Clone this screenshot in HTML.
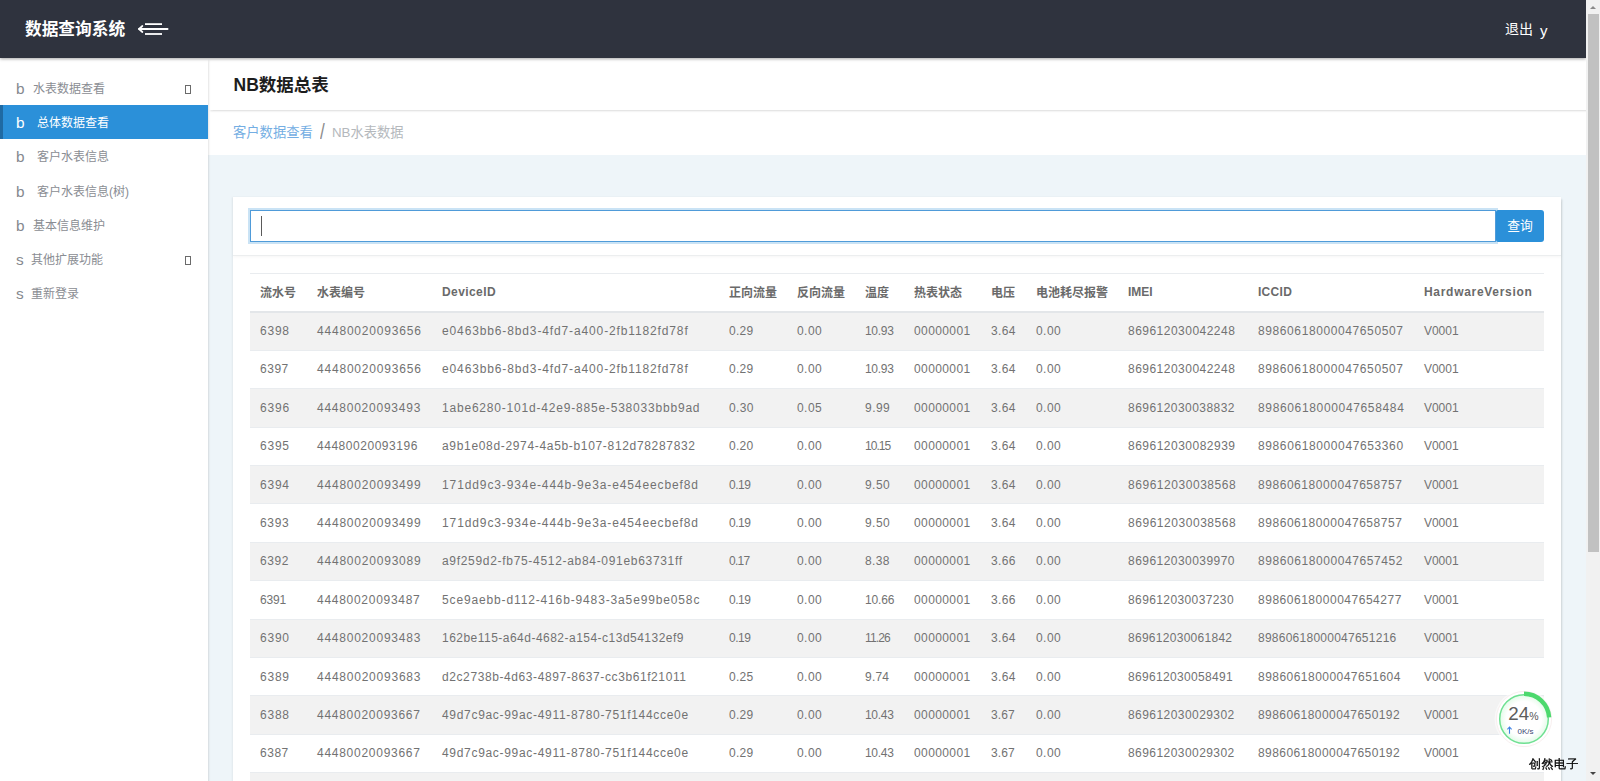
<!DOCTYPE html>
<html lang="zh-CN">
<head>
<meta charset="utf-8">
<title>数据查询系统</title>
<style>
*{box-sizing:border-box;margin:0;padding:0}
html,body{width:1600px;height:781px;overflow:hidden}
body{font-family:"Liberation Sans","Noto Sans CJK SC",sans-serif;background:#eef5f9;color:#777;position:relative}
a{text-decoration:none;color:inherit}
/* header */
.hdr{position:absolute;left:0;top:0;width:1586px;height:58px;background:#2f333e;box-shadow:0 1px 3px rgba(0,0,0,.35);z-index:5}
.brand{position:absolute;left:25px;top:18px;font-size:16.7px;line-height:24px;font-weight:bold;color:#fff;letter-spacing:0}
.tog{position:absolute;left:136px;top:19px}
.logout{position:absolute;left:1505px;top:18px;font-size:14px;line-height:22px;color:#fff}
.logout-i{position:absolute;left:1540px;top:20px;font-size:15px;line-height:22px;color:#fff}
/* sidebar */
.side{position:absolute;left:0;top:58px;width:208px;height:723px;background:#fff;box-shadow:1.6px 1.6px 1.6px rgba(0,0,0,.08),-1px 0 1.6px rgba(0,0,0,.05);z-index:3}
.side ul{list-style:none;position:absolute;left:0;top:13px;width:208px}
.side li{height:34.2px;position:relative;color:#8a8d93;font-size:12px}
.side li .ic{position:absolute;left:16px;top:7px;font-size:15.4px;line-height:22px;color:#85888e}
.side li .tx{position:absolute;left:33px;top:8px;line-height:20px;white-space:nowrap}
.side li.sub .tx{left:37px}
.side li.s2 .tx{left:31px}
.side li.act{background:#2b90d9;color:#fff;border-left:3px solid #1f6aa3}
.side li.act .ic{left:13px;color:#fff}
.side li.act .tx{left:34px}
.side li .bx{position:absolute;left:185px;top:14px;width:6px;height:9px;border:1px solid #6a6a6a}
/* content */
.ph{position:absolute;left:208px;top:58px;width:1378px;height:52px;background:#fff;box-shadow:1.6px 1.6px 1.6px rgba(0,0,0,.1);z-index:2}
.ph h2{position:absolute;left:25.5px;top:14px;font-size:17.5px;line-height:26px;color:#1d1d1d;font-weight:bold;white-space:nowrap}
.bc{position:absolute;left:208px;top:110px;width:1378px;height:45px;background:#fff;z-index:1;font-size:13.3px;line-height:20px;white-space:nowrap}
.bc .a{position:absolute;left:25px;top:13px;color:#74aee3}
.bc .sl{position:absolute;left:112px;top:10px;color:#8c8c8c;font-size:22px;line-height:24px;transform:scaleX(.78);transform-origin:0 0}
.bc .b{position:absolute;left:124px;top:13px;color:#b4b8bc}
.card{position:absolute;left:233px;top:197px;width:1328px;height:620px;background:#fff;box-shadow:1.6px 1.6px 1.6px rgba(0,0,0,.1),-1px 0 1.6px rgba(0,0,0,.05)}
.card .ch{position:absolute;left:0;top:0;width:1328px;height:59px;border-bottom:1px solid #eceeef;box-shadow:0 1px 3px rgba(0,0,0,.04)}
.inp{position:absolute;left:17px;top:13px;width:1246px;height:32px;border:1px solid #4f9bd9;background:#fff;box-shadow:0 0 0 2px rgba(43,144,217,.25);outline:none;border-radius:0;font:inherit;padding:0 10px;display:block}
.caret{position:absolute;left:28px;top:19px;width:1px;height:20px;background:#5a5a5a}
.btn{position:absolute;left:1263px;top:13px;width:48px;height:32px;background:#2b90d9;color:#fff;font:inherit;font-size:12.8px;line-height:32px;text-align:center;border:0;padding:0;border-radius:2px 3px 3px 2px;display:block}
/* table */
table{position:absolute;left:17px;top:76px;width:1294px;border-collapse:collapse;table-layout:fixed;font-size:12px;color:#727272}
th,td{padding:0 0 0 10px;text-align:left;white-space:nowrap;overflow:hidden;vertical-align:middle;font-weight:normal}
thead tr{height:38.4px}
thead th{border-top:1px solid #e9ecef;border-bottom:2px solid #e3e6e9;font-weight:bold;color:#6a6a6a;font-size:12px}
thead th.c{padding-bottom:1px}
tbody tr{height:38.4px}
tbody td{border-top:1px solid #e9ecef}
tbody tr:nth-child(odd){background:#f2f2f2}
/* scrollbar */
.sb{position:absolute;left:1586px;top:0;width:14px;height:781px;background:#f1f1f1;z-index:9}
.sb .th{position:absolute;left:1.5px;top:14px;width:11px;height:538px;background:#c1c1c1}
.sb .up{position:absolute;left:4px;top:6px;width:0;height:0;border:3px solid transparent;border-top:0;border-bottom:3px solid #8a8a8a}
.sb .dn{position:absolute;left:4px;top:772px;width:0;height:0;border:3px solid transparent;border-bottom:0;border-top:3px solid #444}
/* float widgets */
.fw{position:absolute;left:1494px;top:689px;width:60px;height:60px;z-index:8}
.wm{position:absolute;left:1529px;top:755px;font-size:12px;line-height:18px;color:#000;z-index:10;white-space:nowrap;letter-spacing:.5px;-webkit-text-stroke:.3px #000;font-family:"WenQuanYi Zen Hei","Noto Sans CJK SC",sans-serif}
</style>
</head>
<body>
<div class="hdr">
  <div class="brand">数据查询系统</div>
  <svg class="tog" width="40" height="20" viewBox="0 0 40 20"><g fill="none" stroke="#fff" stroke-width="1.8"><path d="M3 10H31.6" stroke-linecap="round"/><path d="M9 5.1H26"/><path d="M9 15H26"/><path d="M6.4 7 3 10l3.4 3" stroke-width="1.7" stroke-linecap="round" stroke-linejoin="round"/></g></svg>
  <div class="logout">退出</div>
  <div class="logout-i">y</div>
</div>

<div class="side">
  <ul>
    <li><span class="ic">b</span><span class="tx">水表数据查看</span><span class="bx"></span></li>
    <li class="sub act"><span class="ic">b</span><span class="tx">总体数据查看</span></li>
    <li class="sub"><span class="ic">b</span><span class="tx">客户水表信息</span></li>
    <li class="sub"><span class="ic">b</span><span class="tx">客户水表信息(树)</span></li>
    <li><span class="ic">b</span><span class="tx">基本信息维护</span></li>
    <li class="s2"><span class="ic">s</span><span class="tx">其他扩展功能</span><span class="bx"></span></li>
    <li class="s2"><span class="ic">s</span><span class="tx">重新登录</span></li>
  </ul>
</div>

<div class="ph"><h2>NB数据总表</h2></div>
<div class="bc"><span class="a">客户数据查看</span><span class="sl">/</span><span class="b">NB水表数据</span></div>

<div class="card">
  <div class="ch">
    <input class="inp" type="text" value=""><div class="caret"></div>
    <button class="btn" type="button">查询</button>
  </div>
  <table>
    <colgroup>
      <col style="width:57px"><col style="width:125px"><col style="width:287px"><col style="width:68px"><col style="width:68px"><col style="width:49px"><col style="width:77px"><col style="width:45px"><col style="width:92px"><col style="width:130px"><col style="width:166px"><col style="width:130px">
    </colgroup>
    <thead>
      <tr><th class="c">流水号</th><th class="c">水表编号</th><th style="letter-spacing:0.42px">DeviceID</th><th class="c">正向流量</th><th class="c">反向流量</th><th class="c">温度</th><th class="c">热表状态</th><th class="c">电压</th><th class="c">电池耗尽报警</th><th style="letter-spacing:-0.02px">IMEI</th><th style="letter-spacing:0.29px">ICCID</th><th style="letter-spacing:0.70px">HardwareVersion</th></tr>
    </thead>
    <tbody>
      <tr><td style="letter-spacing:0.78px">6398</td><td style="letter-spacing:0.80px">44480020093656</td><td style="letter-spacing:0.87px">e0463bb6-8bd3-4fd7-a400-2fb1182fd78f</td><td style="letter-spacing:0.29px">0.29</td><td style="letter-spacing:0.44px">0.00</td><td style="letter-spacing:-0.30px">10.93</td><td style="letter-spacing:0.40px">00000001</td><td style="letter-spacing:0.35px">3.64</td><td style="letter-spacing:0.44px">0.00</td><td style="letter-spacing:0.48px">869612030042248</td><td style="letter-spacing:0.60px">89860618000047650507</td><td style="letter-spacing:-0.03px">V0001</td></tr>
      <tr><td style="letter-spacing:0.53px">6397</td><td style="letter-spacing:0.80px">44480020093656</td><td style="letter-spacing:0.87px">e0463bb6-8bd3-4fd7-a400-2fb1182fd78f</td><td style="letter-spacing:0.29px">0.29</td><td style="letter-spacing:0.44px">0.00</td><td style="letter-spacing:-0.30px">10.93</td><td style="letter-spacing:0.40px">00000001</td><td style="letter-spacing:0.35px">3.64</td><td style="letter-spacing:0.44px">0.00</td><td style="letter-spacing:0.48px">869612030042248</td><td style="letter-spacing:0.60px">89860618000047650507</td><td style="letter-spacing:-0.03px">V0001</td></tr>
      <tr><td style="letter-spacing:0.79px">6396</td><td style="letter-spacing:0.76px">44480020093493</td><td style="letter-spacing:0.80px">1abe6280-101d-42e9-885e-538033bbb9ad</td><td style="letter-spacing:0.33px">0.30</td><td style="letter-spacing:0.44px">0.05</td><td style="letter-spacing:0.46px">9.99</td><td style="letter-spacing:0.40px">00000001</td><td style="letter-spacing:0.35px">3.64</td><td style="letter-spacing:0.44px">0.00</td><td style="letter-spacing:0.46px">869612030038832</td><td style="letter-spacing:0.65px">89860618000047658484</td><td style="letter-spacing:-0.03px">V0001</td></tr>
      <tr><td style="letter-spacing:0.77px">6395</td><td style="letter-spacing:0.53px">44480020093196</td><td style="letter-spacing:0.67px">a9b1e08d-2974-4a5b-b107-812d78287832</td><td style="letter-spacing:0.28px">0.20</td><td style="letter-spacing:0.44px">0.00</td><td style="letter-spacing:-0.95px">10.15</td><td style="letter-spacing:0.40px">00000001</td><td style="letter-spacing:0.35px">3.64</td><td style="letter-spacing:0.44px">0.00</td><td style="letter-spacing:0.49px">869612030082939</td><td style="letter-spacing:0.61px">89860618000047653360</td><td style="letter-spacing:-0.03px">V0001</td></tr>
      <tr><td style="letter-spacing:0.78px">6394</td><td style="letter-spacing:0.79px">44480020093499</td><td style="letter-spacing:0.89px">171dd9c3-934e-444b-9e3a-e454eecbef8d</td><td style="letter-spacing:-0.47px">0.19</td><td style="letter-spacing:0.44px">0.00</td><td style="letter-spacing:0.45px">9.50</td><td style="letter-spacing:0.40px">00000001</td><td style="letter-spacing:0.35px">3.64</td><td style="letter-spacing:0.44px">0.00</td><td style="letter-spacing:0.54px">869612030038568</td><td style="letter-spacing:0.55px">89860618000047658757</td><td style="letter-spacing:-0.03px">V0001</td></tr>
      <tr><td style="letter-spacing:0.66px">6393</td><td style="letter-spacing:0.79px">44480020093499</td><td style="letter-spacing:0.89px">171dd9c3-934e-444b-9e3a-e454eecbef8d</td><td style="letter-spacing:-0.47px">0.19</td><td style="letter-spacing:0.44px">0.00</td><td style="letter-spacing:0.45px">9.50</td><td style="letter-spacing:0.40px">00000001</td><td style="letter-spacing:0.35px">3.64</td><td style="letter-spacing:0.44px">0.00</td><td style="letter-spacing:0.54px">869612030038568</td><td style="letter-spacing:0.55px">89860618000047658757</td><td style="letter-spacing:-0.03px">V0001</td></tr>
      <tr><td style="letter-spacing:0.61px">6392</td><td style="letter-spacing:0.79px">44480020093089</td><td style="letter-spacing:0.69px">a9f259d2-fb75-4512-ab84-091eb63731ff</td><td style="letter-spacing:-0.73px">0.17</td><td style="letter-spacing:0.44px">0.00</td><td style="letter-spacing:0.34px">8.38</td><td style="letter-spacing:0.40px">00000001</td><td style="letter-spacing:0.37px">3.66</td><td style="letter-spacing:0.44px">0.00</td><td style="letter-spacing:0.46px">869612030039970</td><td style="letter-spacing:0.57px">89860618000047657452</td><td style="letter-spacing:-0.03px">V0001</td></tr>
      <tr><td style="letter-spacing:-0.15px">6391</td><td style="letter-spacing:0.72px">44480020093487</td><td style="letter-spacing:0.86px">5ce9aebb-d112-416b-9483-3a5e99be058c</td><td style="letter-spacing:-0.47px">0.19</td><td style="letter-spacing:0.44px">0.00</td><td style="letter-spacing:-0.18px">10.66</td><td style="letter-spacing:0.40px">00000001</td><td style="letter-spacing:0.37px">3.66</td><td style="letter-spacing:0.44px">0.00</td><td style="letter-spacing:0.39px">869612030037230</td><td style="letter-spacing:0.52px">89860618000047654277</td><td style="letter-spacing:-0.03px">V0001</td></tr>
      <tr><td style="letter-spacing:0.77px">6390</td><td style="letter-spacing:0.76px">44480020093483</td><td style="letter-spacing:0.48px">162be115-a64d-4682-a154-c13d54132ef9</td><td style="letter-spacing:-0.47px">0.19</td><td style="letter-spacing:0.44px">0.00</td><td style="letter-spacing:-0.88px">11.26</td><td style="letter-spacing:0.40px">00000001</td><td style="letter-spacing:0.35px">3.64</td><td style="letter-spacing:0.44px">0.00</td><td style="letter-spacing:0.28px">869612030061842</td><td style="letter-spacing:0.25px">89860618000047651216</td><td style="letter-spacing:-0.03px">V0001</td></tr>
      <tr><td style="letter-spacing:0.78px">6389</td><td style="letter-spacing:0.77px">44480020093683</td><td style="letter-spacing:0.59px">d2c2738b-4d63-4897-8637-cc3b61f21011</td><td style="letter-spacing:0.28px">0.25</td><td style="letter-spacing:0.44px">0.00</td><td style="letter-spacing:0.21px">9.74</td><td style="letter-spacing:0.40px">00000001</td><td style="letter-spacing:0.35px">3.64</td><td style="letter-spacing:0.44px">0.00</td><td style="letter-spacing:0.32px">869612030058491</td><td style="letter-spacing:0.47px">89860618000047651604</td><td style="letter-spacing:-0.03px">V0001</td></tr>
      <tr><td style="letter-spacing:0.78px">6388</td><td style="letter-spacing:0.73px">44480020093667</td><td style="letter-spacing:0.69px">49d7c9ac-99ac-4911-8780-751f144cce0e</td><td style="letter-spacing:0.29px">0.29</td><td style="letter-spacing:0.44px">0.00</td><td style="letter-spacing:-0.30px">10.43</td><td style="letter-spacing:0.40px">00000001</td><td style="letter-spacing:0.10px">3.67</td><td style="letter-spacing:0.44px">0.00</td><td style="letter-spacing:0.44px">869612030029302</td><td style="letter-spacing:0.43px">89860618000047650192</td><td style="letter-spacing:-0.03px">V0001</td></tr>
      <tr><td style="letter-spacing:0.53px">6387</td><td style="letter-spacing:0.73px">44480020093667</td><td style="letter-spacing:0.69px">49d7c9ac-99ac-4911-8780-751f144cce0e</td><td style="letter-spacing:0.29px">0.29</td><td style="letter-spacing:0.44px">0.00</td><td style="letter-spacing:-0.30px">10.43</td><td style="letter-spacing:0.40px">00000001</td><td style="letter-spacing:0.10px">3.67</td><td style="letter-spacing:0.44px">0.00</td><td style="letter-spacing:0.44px">869612030029302</td><td style="letter-spacing:0.43px">89860618000047650192</td><td style="letter-spacing:-0.03px">V0001</td></tr>
      <tr><td></td><td></td><td></td><td></td><td></td><td></td><td></td><td></td><td></td><td></td><td></td><td></td></tr>
    </tbody>
  </table>
</div>

<div class="fw">
  <svg width="60" height="60" viewBox="0 0 60 60">
    <defs><radialGradient id="wg" cx="50%" cy="50%" r="50%"><stop offset="0.72" stop-color="#ffffff"/><stop offset="1" stop-color="#e3fbe8"/></radialGradient></defs>
    <circle cx="30" cy="30" r="29.5" fill="#fff" fill-opacity=".55"/>
    <circle cx="30" cy="30" r="27.6" fill="#fff" stroke="#f8efef" stroke-width="1"/>
    <circle cx="30" cy="30" r="24.3" fill="url(#wg)" stroke="#6fe092" stroke-width="1.5"/>
    <path d="M30 4.8A25.2 25.2 0 0 1 55.15 28.4" fill="none" stroke="#4cd96d" stroke-width="4.4"/>
    <text x="14.2" y="31" font-family="Liberation Sans,sans-serif" font-size="18.8" fill="#5c5c5c">24</text>
    <text x="35.3" y="31" font-family="Liberation Sans,sans-serif" font-size="10.5" fill="#555">%</text>
    <text x="23.5" y="44.8" font-family="Liberation Sans,sans-serif" font-size="8" fill="#3d4872">0K/s</text>
    <path d="M15.5 44.8v-6.6M13.4 40.4l2.1-2.4 2.1 2.4" fill="none" stroke="#3f82e4" stroke-width="1.1"/>
  </svg>
</div>
<div class="wm">创然电子</div>

<div class="sb"><div class="up"></div><div class="th"></div><div class="dn"></div></div>
</body>
</html>
